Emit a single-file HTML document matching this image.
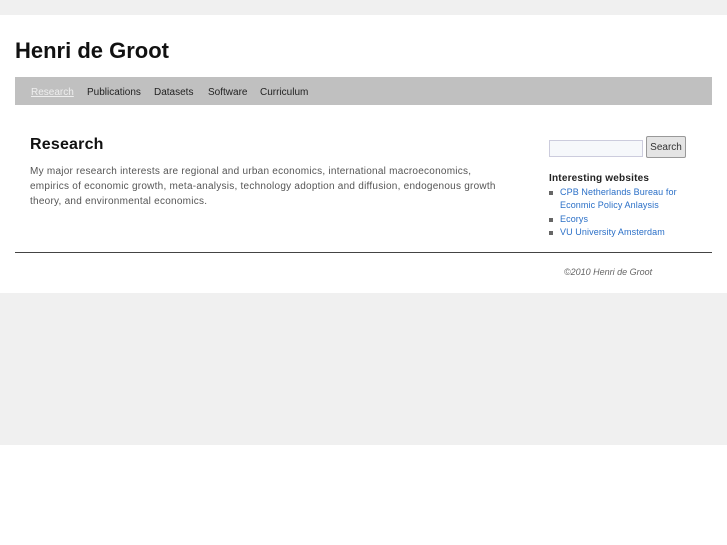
<!DOCTYPE html>
<html><head><style>
*{margin:0;padding:0;box-sizing:border-box}
body{width:727px;height:545px;background:#fff;font-family:"Liberation Sans",sans-serif;position:relative;overflow:hidden}
.top{position:absolute;left:0;top:0;width:727px;height:15px;background:#f0f0f0}
.bot{position:absolute;left:0;top:293px;width:727px;height:152px;background:#f0f0f0}
h1{position:absolute;left:15px;top:38px;font-size:22px;font-weight:bold;color:#111}
.nav{position:absolute;left:15px;top:77px;width:697px;height:28px;background:#c0c0c0;font-size:10px;color:#222}
.nav span{position:absolute;top:10px}
h2{position:absolute;left:30px;top:136px;font-size:16px;font-weight:bold;color:#111;letter-spacing:0.2px}
p{position:absolute;left:30px;top:164px;width:480px;font-size:10px;letter-spacing:0.25px;line-height:15px;color:#555}
.inp{position:absolute;left:549px;top:140px;width:94px;height:17px;border:1px solid #ccd;background:#f6f8fb}
.btn{position:absolute;left:646px;top:136px;width:40px;height:22px;border:1px solid #999;background:#e4e4e4;border-radius:2px;font-size:10px;color:#333;text-align:center;line-height:22px}
h3{position:absolute;left:549px;top:173px;font-size:10px;font-weight:bold;color:#222;letter-spacing:0.2px}
ul{position:absolute;left:549px;top:186px;list-style:none;font-size:9px;line-height:13.4px;color:#2a6fc7;letter-spacing:0.1px}
li{padding-left:11px;position:relative}
li.b:before{content:"";position:absolute;left:0;top:5px;width:4px;height:4px;background:#666}
.hr{position:absolute;left:15px;top:252px;width:697px;height:1px;background:#444}
.foot{position:absolute;left:564px;top:267px;font-size:9px;font-style:italic;color:#666}
</style></head><body>
<div class="top"></div>
<h1>Henri de Groot</h1>
<div class="nav">
<span style="left:16px;color:#eee;text-decoration:underline">Research</span>
<span style="left:72px">Publications</span>
<span style="left:139px">Datasets</span>
<span style="left:193px">Software</span>
<span style="left:245px">Curriculum</span>
</div>
<h2>Research</h2>
<p>My major research interests are regional and urban economics, international macroeconomics, empirics of economic growth, meta-analysis, technology adoption and diffusion, endogenous growth theory, and environmental economics.</p>
<div class="inp"></div>
<div class="btn">Search</div>
<h3>Interesting websites</h3>
<ul>
<li class="b">CPB Netherlands Bureau for</li>
<li>Econmic Policy Anlaysis</li>
<li class="b">Ecorys</li>
<li class="b">VU University Amsterdam</li>
</ul>
<div class="hr"></div>
<div class="foot">©2010 Henri de Groot</div>
<div class="bot"></div>
</body></html>
